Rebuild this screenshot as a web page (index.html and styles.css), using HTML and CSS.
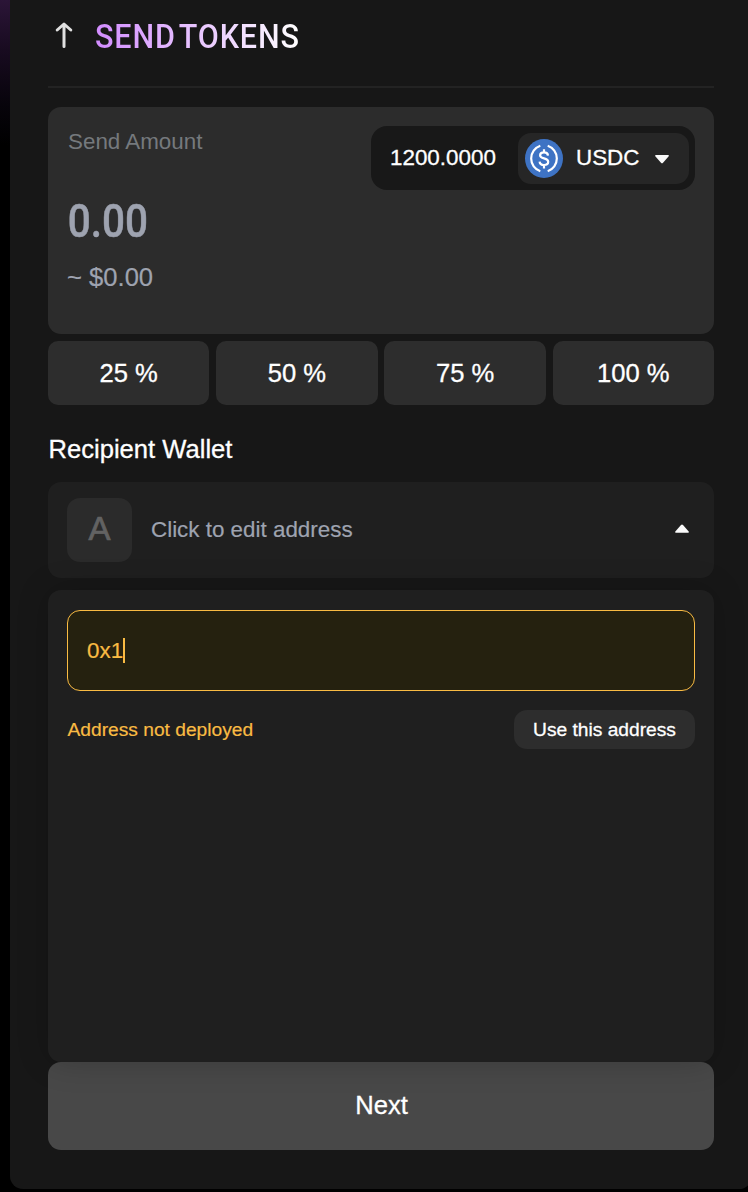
FILE: index.html
```html
<!DOCTYPE html>
<html lang="en">
<head>
<meta charset="utf-8">
<title>Send Tokens</title>
<link rel="stylesheet" href="styles.css">
</head>
<body>
<main class="panel">
  <header class="header">
    <svg class="header-icon" width="18" height="27" viewBox="0 0 18 27" fill="none" stroke="#e0e0e0" stroke-width="3" stroke-linecap="round" stroke-linejoin="round"><path d="M9 25.500V3.500M2.200 9L9 3L15.800 9"/></svg>
    <h1 class="title">SEND TOKENS</h1>
  </header>

  <section class="amount-card">
    <div class="amount-info">
      <div class="amount-label">Send Amount</div>
      <div class="amount-value">0.00</div>
      <div class="amount-fiat">~ $0.00</div>
    </div>
    <div class="balance">
      <span class="balance-value">1200.0000</span>
      <div class="token">
        <svg class="token-icon" width="38" height="39" viewBox="0 0 38 39" fill="none"><ellipse cx="19" cy="19.500" rx="19" ry="19.500" fill="#3e73c4"/><g stroke="#fff" stroke-width="2.200"><path d="M15.300 6.800A13.400 13.400 0 0 0 15.300 32.200M22.700 6.800A13.400 13.400 0 0 1 22.700 32.200"/><path d="M23 16.600C22.800 14.400 21.400 13.400 19 13.400C16.500 13.400 15.100 14.500 15.100 16.300C15.100 20.600 23.200 18.200 23.200 22.800C23.200 24.800 21.700 26 19 26C16.300 26 14.800 24.900 14.600 22.600M19 10.300V13.500M19 26V29.500"/></g></svg>
        <span class="token-name">USDC</span>
        <svg class="token-caret" width="14" height="9" viewBox="0 0 14 9"><path d="M0.800 0H13.200Q14.400 0.400 13.500 1.500L8 7.700Q7 8.700 6 7.700L0.500 1.500Q-0.400 0.400 0.800 0Z" fill="#fafafa"/></svg>
      </div>
    </div>
  </section>

  <div class="percents">
    <button class="percent">25 %</button>
    <button class="percent">50 %</button>
    <button class="percent">75 %</button>
    <button class="percent">100 %</button>
  </div>

  <h2 class="subtitle">Recipient Wallet</h2>

  <div class="recipient">
    <div class="avatar">A</div>
    <span class="recipient-text">Click to edit address</span>
    <svg class="recipient-caret" width="14" height="9" viewBox="0 0 14 9"><path d="M0.800 8.700H13.200Q14.400 8.300 13.500 7.200L8 1Q7 0 6 1L0.500 7.200Q-0.400 8.300 0.800 8.700Z" fill="#fafafa"/></svg>
  </div>

  <section class="address-panel">
    <div class="address-input"><span>0x1</span><i class="caret"></i></div>
    <div class="address-row">
      <span class="warning">Address not deployed</span>
      <button class="use-address">Use this address</button>
    </div>
  </section>

  <button class="next">Next</button>
</main>
</body>
</html>
```
FILE: styles.css
```css
* { box-sizing: border-box; }
body {
  margin: 0;
  height: 1192px;
  overflow: hidden;
  background: linear-gradient(180deg, #2b1537 0, #180b20 50px, #07040b 105px, #000 145px);
  font-family: "Liberation Sans", Arial, sans-serif;
  font-size: 22.4px;
  color: #fff;
}
button {
  border: 0;
  padding: 0;
  font-family: inherit;
  color: #fff;
}
.panel {
  display: flex;
  flex-direction: column;
  width: 742px;
  height: 1189px;
  margin-left: 10px;
  padding: 0 38px;
  background: #171717;
  border-radius: 0 0 13px 13px;
}
.header {
  display: flex;
  height: 88px;
  padding: 21px 0 0 7px;
  border-bottom: 2px solid #232323;
  flex: none;
}
.title {
  margin: -4px 0 0 22px;
  height: 40px;
  font: 500 33.5px/40px Roboto, sans-serif;
  letter-spacing: .9px;
  word-spacing: -5px;
  transform: scaleX(.912);
  transform-origin: 0 0;
  background: linear-gradient(90deg, #d28cff, #fff);
  -webkit-background-clip: text;
  background-clip: text;
  color: transparent;
}
.amount-card {
  display: flex;
  justify-content: space-between;
  align-items: flex-start;
  flex: none;
  height: 227px;
  margin-top: 19px;
  padding: 19px;
  background: #2c2c2c;
  border-radius: 13px;
}
.amount-label {
  padding: 1px 0 0 1px;
  line-height: 30px;
  color: #75797d;
}
.amount-value {
  margin-top: 36px;
  padding-left: 1px;
  font: 500 46.500px/56px Roboto, sans-serif;
  color: #9ea3b0;
  -webkit-text-stroke: .5px currentColor;
  transform: scaleX(.87);
  transform-origin: 0 0;
}
.amount-fiat {
  margin-top: 13px;
  font-size: 25.6px;
  line-height: 30px;
  color: #9ea3b0;
  -webkit-text-stroke: .2px currentColor;
}
.balance {
  display: flex;
  align-items: center;
  width: 324px;
  height: 64px;
  padding: 0 6px 0 19px;
  background: #181818;
  border-radius: 16px;
}
.balance-value, .token-name { -webkit-text-stroke: .3px currentColor; }
.token {
  display: flex;
  align-items: center;
  width: 171px;
  height: 51px;
  margin-left: auto;
  padding-left: 7px;
  background: #262626;
  border-radius: 13px;
}
.token-name { margin: 0 16px 0 13px; }
.token-caret { margin-top: 2px; }
.percents {
  display: grid;
  grid-template-columns: repeat(4, 1fr);
  gap: 6.8px;
  margin-top: 7px;
}
.percent {
  height: 64px;
  font-size: 25.6px;
  background: #2d2d2d;
  border-radius: 10px;
  -webkit-text-stroke: .3px currentColor;
}
.subtitle {
  margin: 29px 0 0;
  padding-left: .5px;
  height: 48px;
  font-size: 25.6px;
  font-weight: 400;
  line-height: 30px;
  -webkit-text-stroke: .3px currentColor;
}
.recipient {
  display: flex;
  align-items: center;
  flex: none;
  height: 96px;
  padding: 0 25px 0 19px;
  background: #1f1f1f;
  border-radius: 13px;
}
.recipient-caret { margin-bottom: 3px; }
.avatar {
  display: grid;
  place-items: center;
  width: 65px;
  height: 64px;
  padding-bottom: 2px;
  font-size: 33px;
  color: #626262;
  background: #2b2b2b;
  border-radius: 13px;
  -webkit-text-stroke: .7px currentColor;
}
.recipient-text {
  flex: 1;
  margin-left: 19px;
  color: #9ea3b0;
  -webkit-text-stroke: .2px currentColor;
}
.address-panel {
  position: relative;
  flex: none;
  height: 472px;
  margin-top: 12px;
  padding: 20px 19px;
  background: #1f1f1f;
  border-radius: 13px;
  box-shadow: 0 0 32px rgba(0, 0, 0, .2);
}
.address-input {
  display: flex;
  align-items: center;
  height: 81px;
  padding-left: 19px;
  color: #f9bb43;
  background: #25210f;
  border: 1px solid #f9bb43;
  border-radius: 13px;
  -webkit-text-stroke: .2px currentColor;
}
.caret {
  width: 2px;
  height: 25px;
  background: #f9bb43;
}
.address-row {
  display: flex;
  justify-content: space-between;
  align-items: center;
  height: 39px;
  margin-top: 19px;
  font-size: 19.2px;
}
.warning {
  padding-left: .5px;
  color: #f9bb43;
  -webkit-text-stroke: .2px currentColor;
}
.use-address {
  width: 181px;
  height: 39px;
  font-size: 19.2px;
  background: #2d2d2d;
  border-radius: 13px;
  -webkit-text-stroke: .3px currentColor;
}
.next {
  flex: none;
  height: 88px;
  padding: 0 0 2px 1px;
  font-size: 25.6px;
  background: #484848;
  border-radius: 13px;
  -webkit-text-stroke: .3px currentColor;
}
```
